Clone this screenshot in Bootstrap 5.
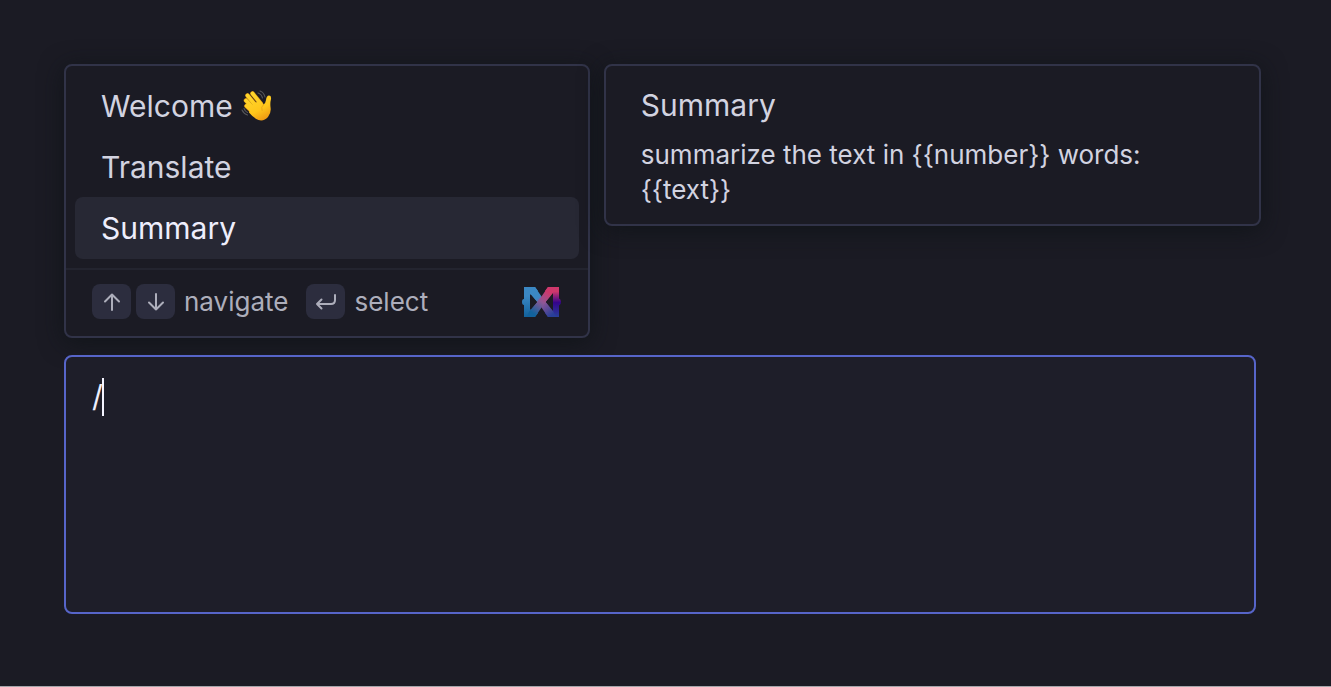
<!DOCTYPE html>
<html lang="en">
<head>
<meta charset="utf-8">
<meta name="viewport" content="width=device-width, initial-scale=1">
<title>Prompt menu</title>
<link href="https://cdn.jsdelivr.net/npm/bootstrap@5.3.0/dist/css/bootstrap.min.css" rel="stylesheet">
<style>
  body {
    background: #1b1b24;
    color: #d2d3e0;
    font-family: Inter, "Liberation Sans", sans-serif;
    font-size: 26px;
    font-weight: 410;
    line-height: 35px;
    border-bottom: 1px solid #a5a5aa;
  }
  .composer { padding: 64px 70px 72px 64px; }
  .popups {
    grid-template-columns: minmax(0, 4fr) minmax(0, 5fr);
    gap: 14px;
  }
  .panel {
    background: #1b1b24;
    border: 2px solid #313348;
    border-radius: 8px;
    box-shadow: 0 4px 24px rgba(13, 19, 22, .75);
  }
  .preview { padding: 20px 35px 17px; }
  .preview h2, .prompt-item { font-size: 30px; line-height: 38px; font-weight: 410; }
  .preview h2 { margin: 0 0 13px; }
  .prompt-list { padding: 9px; }
  .prompt-item {
    background: transparent;
    border: 0;
    border-radius: 8px;
    color: #d2d3e0;
    padding: 12px 26px 11px;
  }
  .prompt-item.active { background: #272834; color: #eeeefc; padding-bottom: 12px; }
  .hints {
    border-top: 2px solid #23242f;
    color: #adaebb;
    padding: 14px 27px 17px 26px;
  }
  .hints kbd {
    background: #2c2d3e;
    color: #adaebb;
    border-radius: 8px;
    width: 39px;
    height: 35px;
    padding: 0;
  }
  .keys { gap: 5px; }
  .hint { gap: 9px; }
  .hint-row { gap: 18px; }
  .editor { margin: 17px 5px 0 0; }
  .editor textarea, .editor textarea:focus {
    background: #1e1e29;
    border: 2px solid #5765c9;
    border-radius: 8px;
    box-shadow: none;
    color: #eeeefc;
    font-size: 30px;
    font-weight: 410;
    line-height: 38px;
    height: 259px;
    padding: 20px 26px;
    resize: none;
  }
  .caret {
    position: absolute;
    left: 38px;
    top: 23px;
    width: 2px;
    height: 38px;
    background: #f4f4ff;
  }
</style>
</head>
<body class="min-vh-100">
<main class="composer">
  <div class="popups d-grid align-items-start">
    <section class="panel" aria-label="Prompts">
      <div class="prompt-list d-flex flex-column">
        <button type="button" class="prompt-item d-flex align-items-center text-start">Welcome
          <svg class="ms-2" width="32" height="32" viewBox="0 0 32 32" role="img" aria-label="waving hand">
            <defs>
              <linearGradient id="skin" gradientUnits="userSpaceOnUse" x1="6" y1="2" x2="22" y2="31">
                <stop offset="0" stop-color="#ffd92f"/><stop offset=".65" stop-color="#ffc61b"/><stop offset="1" stop-color="#ee9712"/>
              </linearGradient>
            </defs>
            <g fill="none" stroke="#55565a" stroke-width="1.100" stroke-linecap="round">
              <path d="M17 3q3.500 1 4.500 5M19 1q4 1.500 5 6M1 20q2 4 5.500 5M3 18.500q1 3 3.500 4"/>
            </g>
            <g fill="none" stroke="#b9780f" stroke-width="4.600" stroke-linecap="round">
              <path d="M11.500 3.500L20 14M6.500 5.500L16 17M5 10.500L13 19M5.500 16L12 22"/>
            </g>
            <g fill="none" stroke="url(#skin)" stroke-width="3.700" stroke-linecap="round">
              <path d="M11.500 3.500L20 14M6.500 5.500L16 17M5 10.500L13 19M5.500 16L12 22"/>
            </g>
            <path d="M18 11L22.500 14.500Q24.500 13.500 25 10Q25.500 5.500 28 5.500Q30.500 5.500 30 9Q29 13 29.500 17Q30.500 22.500 27 27Q23 31.500 17.500 30Q13 28.500 8 22.500L10 17L14 13Z" fill="url(#skin)"/>
            <path fill="none" stroke="#e7a018" stroke-width=".8" stroke-linecap="round" d="M22.500 14.500Q19.500 17 21 20.500"/>
          </svg>
        </button>
        <button type="button" class="prompt-item text-start">Translate</button>
        <button type="button" class="prompt-item active text-start" aria-current="true">Summary</button>
      </div>
      <div class="hints d-flex align-items-center justify-content-between">
        <div class="hint-row d-flex align-items-center">
          <div class="hint d-flex align-items-center">
            <div class="keys d-flex">
              <kbd class="d-flex align-items-center justify-content-center" aria-label="Up">
                <svg width="18" height="18" viewBox="0 0 18 18" fill="none" stroke="currentColor" stroke-width="2" stroke-linecap="round" stroke-linejoin="round"><path d="M9 17V1.500M2 8.500L9 1.500l7 7"/></svg>
              </kbd>
              <kbd class="d-flex align-items-center justify-content-center" aria-label="Down">
                <svg width="18" height="18" viewBox="0 0 18 18" fill="none" stroke="currentColor" stroke-width="2" stroke-linecap="round" stroke-linejoin="round"><path d="M9 1v15.500M2 9.500l7 7 7-7"/></svg>
              </kbd>
            </div>
            <span>navigate</span>
          </div>
          <div class="hint d-flex align-items-center">
            <kbd class="d-flex align-items-center justify-content-center" aria-label="Enter">
              <svg width="22" height="18" viewBox="0 0 22 18" fill="none" stroke="currentColor" stroke-width="2" stroke-linecap="round" stroke-linejoin="round"><path d="M20 2v5q0 4-4 4H2M6.500 6.500L2 11 6.500 15.500"/></svg>
            </kbd>
            <span>select</span>
          </div>
        </div>
        <svg width="40" height="32" viewBox="0 0 40 32" role="img" aria-label="Logo">
          <defs>
            <linearGradient id="blue" x1="0" y1="0" x2="0" y2="1"><stop offset=".3" stop-color="#3b88c4"/><stop offset="1" stop-color="#12629c"/></linearGradient>
            <linearGradient id="pink" x1=".75" y1="0" x2=".75" y2="1"><stop offset=".15" stop-color="#cf386c"/><stop offset=".52" stop-color="#34048c"/><stop offset="1" stop-color="#283f98"/></linearGradient>
            <linearGradient id="cross" gradientUnits="userSpaceOnUse" x1="27" y1="6" x2="12" y2="27"><stop offset="0" stop-color="#cf386c"/><stop offset=".45" stop-color="#8f5795"/><stop offset="1" stop-color="#12629c"/></linearGradient>
            <linearGradient id="fall" gradientUnits="userSpaceOnUse" x1="10" y1="4" x2="31" y2="29"><stop offset="0" stop-color="#3b88c4"/><stop offset=".3" stop-color="#3b88c4"/><stop offset=".55" stop-color="#8a5697"/><stop offset="1" stop-color="#283f98"/></linearGradient>
          </defs>
          <path fill="url(#blue)" d="M3 1h11l3 4-7 2v18l7 2-3 4H3V19Q1 19 1 16t2-3z"/>
          <path fill="url(#pink)" d="M38 1H27l-3 4 8 2v18l-8 2 3 4h11V19.500Q40 19 40 16t-2-3.500z"/>
          <path fill="url(#fall)" d="M7 1h7l6.500 9.500L32 25l3 6h-8l-6.500-9.500L8.500 7z"/>
          <path fill="url(#cross)" d="M34 1h-7l-6.500 9.500L8.500 25 5 31h9l6.500-9.500L32 7z"/>
          <path fill="#1b1b24" d="M9 8l7 8-7 8zM32 8l-7 8 7 8z"/>
        </svg>
      </div>
    </section>
    <section class="panel preview" aria-label="Prompt preview">
      <h2>Summary</h2>
      <p class="mb-0">summarize the text in {{number}} words:<br>{{text}}</p>
    </section>
  </div>
  <div class="editor position-relative">
    <textarea class="form-control" aria-label="Message" spellcheck="false">/</textarea>
    <span class="caret" aria-hidden="true"></span>
  </div>
</main>
<script src="https://cdn.jsdelivr.net/npm/bootstrap@5.3.0/dist/js/bootstrap.bundle.min.js"></script>
</body>
</html>
